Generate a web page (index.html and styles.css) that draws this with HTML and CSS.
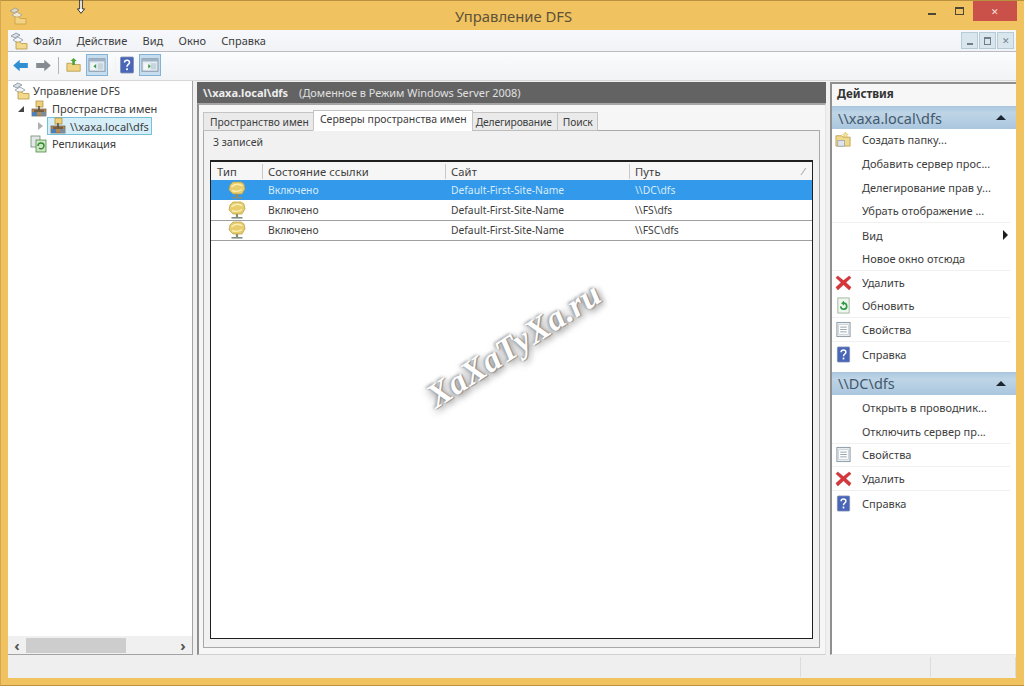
FILE: index.html
```html
<!DOCTYPE html>
<html lang="ru">
<head>
<meta charset="utf-8">
<title>Управление DFS</title>
<link rel="stylesheet" href="styles.css">
</head>
<body>
<svg class="defs" width="0" height="0">
  <defs>
    <symbol id="mmc" viewBox="0 0 18 18">
      <path d="M1 4l5-3 4 2-5 3z" fill="#d9dfe6" stroke="#7d8b99" stroke-width=".8"/>
      <path d="M3 8l5-3 5 3-5 3z" fill="#f3f5f7" stroke="#8b97a3" stroke-width=".8"/>
      <path d="M6 10h4l1 1.500h6v5.500H6z" fill="#f2d98e" stroke="#b9953f" stroke-width=".8"/>
    </symbol>
    <symbol id="ns" viewBox="0 0 18 18">
      <rect x="2" y="9" width="14" height="7" fill="#b78a54" stroke="#6d5a46" stroke-width=".7"/>
      <rect x="6" y="1" width="7" height="6" fill="#f0cf7a" stroke="#a98b3b" stroke-width=".7"/>
      <path d="M9 6v4M4 11h10" stroke="#333" stroke-width="1.200"/>
      <rect x="2" y="12" width="5" height="4" fill="#4d7fb8"/>
      <rect x="11" y="12" width="5" height="4" fill="#7b8c9c"/>
    </symbol>
    <symbol id="repl" viewBox="0 0 18 18">
      <rect x="1" y="1" width="9" height="11" fill="#e2e8ea" stroke="#6f8c6f" stroke-width=".8"/>
      <rect x="6" y="5" width="10" height="12" fill="#cfe4c4" stroke="#4f8a45" stroke-width=".8"/>
      <path d="M8 11a3 3 0 0 1 6 0M14 11a3 3 0 0 1-5 2" fill="none" stroke="#2f8a2f" stroke-width="1.400"/>
    </symbol>
    <symbol id="up" viewBox="0 0 18 18">
      <path d="M1 7h5l1.500 1.500H16V16H1z" fill="#f0d47f" stroke="#b08f3c" stroke-width=".8"/>
      <path d="M7 9V4.500h-2L8.500 1 12 4.500h-2V9z" fill="#4ea53a"/>
    </symbol>
    <symbol id="pane" viewBox="0 0 20 18">
      <rect x="1" y="2" width="18" height="14" fill="#e3ecf2" stroke="#7f8f9f"/>
      <rect x="1" y="2" width="18" height="3" fill="#9fb2c4"/>
      <rect x="3" y="7" width="6" height="7" fill="#f4f7f9"/>
      <rect x="11" y="7" width="6" height="7" fill="#c6d4de"/>
      <path d="M6 10.500l3-2.500v5z" fill="#3c9a3c"/>
    </symbol>
    <symbol id="pane2" viewBox="0 0 20 18">
      <rect x="1" y="2" width="18" height="14" fill="#e3ecf2" stroke="#7f8f9f"/>
      <rect x="1" y="2" width="18" height="3" fill="#9fb2c4"/>
      <rect x="3" y="7" width="6" height="7" fill="#f4f7f9"/>
      <rect x="11" y="7" width="6" height="7" fill="#c6d4de"/>
      <path d="M11 10.500l-3-2.500v5z" fill="#3c9a3c"/>
    </symbol>
    <symbol id="help" viewBox="0 0 16 18">
      <rect x="1.500" y="1" width="13" height="16" rx="1" fill="#4a66b8" stroke="#7f8fb5" stroke-width=".8"/>
      <path d="M5.500 6.500c0-3 5-3 5 0 0 2-2.500 2-2.500 4.300" fill="none" stroke="#fff" stroke-width="1.600"/>
      <rect x="7.100" y="12.300" width="1.800" height="1.900" fill="#fff"/>
    </symbol>
    <symbol id="server" viewBox="0 0 18 18">
      <path d="M2 4l3-3h8l3 2 1 5-3 5H5L1 9z" fill="#e7cd6c" stroke="#b79f42" stroke-width=".7"/>
      <path d="M3.500 6c3-3.500 8-3.500 11-1M4 9.500c3 1.200 7 1.200 10-1" fill="none" stroke="#f9eeb4" stroke-width="1.400"/>
      <path d="M9 13v3" stroke="#8d8d68" stroke-width="2.200"/>
      <path d="M3.500 16.800h11" stroke="#7f8f86" stroke-width="1.600"/>
    </symbol>
    <symbol id="del" viewBox="0 0 18 18">
      <path d="M3 2l6 5 6-5 2 2-5.500 5 5.500 5-2 3-6-5.500L3 17l-2-3 5.500-5L1 4z" fill="#d8343a" stroke="#a8383d" stroke-width=".5"/>
    </symbol>
    <symbol id="refresh" viewBox="0 0 18 18">
      <rect x="3" y="1" width="12" height="16" fill="#eef6ee" stroke="#9fb79f"/>
      <path d="M6 10a3.200 3.200 0 1 0 3-3.500" fill="none" stroke="#2e9a43" stroke-width="1.700"/>
      <path d="M9.500 4v5L6.500 6.500z" fill="#2e9a43"/>
    </symbol>
    <symbol id="props" viewBox="0 0 18 18">
      <rect x="2" y="1.500" width="14" height="15" fill="#e8edf0" stroke="#8b98a3"/>
      <rect x="4" y="4" width="10" height="10" fill="#fff" stroke="#b4bec6" stroke-width=".6"/>
      <path d="M5.500 6.500h7M5.500 9h7M5.500 11.500h7" stroke="#8b98a3" stroke-width=".9"/>
    </symbol>
    <symbol id="newfolder" viewBox="0 0 18 18">
      <path d="M1 5h6l1.500 1.500H16V16H1z" fill="#f0d88d" stroke="#b59645" stroke-width=".8"/>
      <rect x="3" y="10" width="7" height="6" fill="#dde4ee" stroke="#7f90a8" stroke-width=".6"/>
      <path d="M11 1l1 2 2 .5-1.500 1.500.5 2-2-1-2 1 .5-2L8 3.500 10 3z" fill="#f7e59a" stroke="#c9ab4b" stroke-width=".5"/>
    </symbol>
  </defs>
</svg>

<div class="window">
  <header class="titlebar">
    <svg class="app-icon"><use href="#mmc"/></svg>
    <span class="title">Управление DFS</span>
    <div class="win-controls">
      <span class="wc wc-min"><i></i></span>
      <span class="wc wc-max"><i></i></span>
      <span class="wc wc-close">✕</span>
    </div>
  </header>

  <div class="client">
    <nav class="menubar">
      <svg class="menu-icon"><use href="#mmc"/></svg>
      <span class="menu-item">Файл</span>
      <span class="menu-item">Действие</span>
      <span class="menu-item">Вид</span>
      <span class="menu-item">Окно</span>
      <span class="menu-item">Справка</span>
      <div class="mdi-controls">
        <span class="mdi"><i class="mdi-min"></i></span>
        <span class="mdi"><i class="mdi-rest"></i></span>
        <span class="mdi mdi-x">✕</span>
      </div>
    </nav>

    <div class="toolbar">
      <svg class="tb-arrow" viewBox="0 0 20 16"><path d="M1 8l8-7v4h10v6H9v4z" fill="#2f8fd0"/></svg>
      <svg class="tb-arrow" viewBox="0 0 20 16"><path d="M19 8l-8-7v4H1v6h10v4z" fill="#858b90"/></svg>
      <span class="tb-sep"></span>
      <svg class="tb-icon"><use href="#up"/></svg>
      <span class="tb-toggle"><svg><use href="#pane"/></svg></span>
      <span class="tb-sep tb-sep-faint"></span>
      <svg class="tb-icon"><use href="#help"/></svg>
      <span class="tb-toggle"><svg><use href="#pane2"/></svg></span>
    </div>

    <div class="panes">
      <aside class="tree">
        <div class="tree-items">
          <div class="node lvl0"><svg class="ico"><use href="#mmc"/></svg><span>Управление DFS</span></div>
          <div class="node lvl1"><span class="tw tw-open"></span><svg class="ico"><use href="#ns"/></svg><span>Пространства имен</span></div>
          <div class="node lvl2"><span class="tw tw-closed"></span><span class="selected"><svg class="ico"><use href="#ns"/></svg><span>\\xaxa.local\dfs</span></span></div>
          <div class="node lvl1b"><svg class="ico"><use href="#repl"/></svg><span>Репликация</span></div>
        </div>
        <div class="hscroll">
          <span class="sc-arrow">‹</span>
          <span class="sc-track"><span class="sc-thumb"></span></span>
          <span class="sc-arrow">›</span>
        </div>
      </aside>

      <main class="center">
        <div class="center-head"><b>\\xaxa.local\dfs</b><span>(Доменное в Режим Windows Server 2008)</span></div>
        <div class="center-body">
          <div class="tabs">
            <span class="tab">Пространство имен</span>
            <span class="tab tab-active">Серверы пространства имен</span>
            <span class="tab tab-tight tab-deleg">Делегирование</span>
            <span class="tab tab-tight tab-find">Поиск</span>
          </div>
          <section class="tab-panel">
            <p class="count">3 записей</p>
            <div class="list">
              <div class="list-head">
                <span>Тип</span><span>Состояние ссылки</span><span>Сайт</span><span class="path-h">Путь<i>⁄</i></span>
              </div>
              <div class="row row-sel"><span class="cell-ico"><svg><use href="#server"/></svg></span><span>Включено</span><span>Default-First-Site-Name</span><span>\\DC\dfs</span></div>
              <div class="row"><span class="cell-ico"><svg><use href="#server"/></svg></span><span>Включено</span><span>Default-First-Site-Name</span><span>\\FS\dfs</span></div>
              <div class="row"><span class="cell-ico"><svg><use href="#server"/></svg></span><span>Включено</span><span>Default-First-Site-Name</span><span>\\FSC\dfs</span></div>
            </div>
          </section>
        </div>
      </main>

      <aside class="actions">
        <h2 class="actions-title">Действия</h2>
        <div class="group-head"><span>\\xaxa.local\dfs</span><i class="caret"></i></div>
        <ul class="action-list list-a">
          <li><svg><use href="#newfolder"/></svg><span>Создать папку...</span></li>
          <li><span class="noicon">Добавить сервер прос...</span></li>
          <li><span class="noicon">Делегирование прав у...</span></li>
          <li class="sep"><span class="noicon">Убрать отображение ...</span></li>
          <li><span class="noicon">Вид</span><i class="sub"></i></li>
          <li class="sep"><span class="noicon">Новое окно отсюда</span></li>
          <li><svg><use href="#del"/></svg><span>Удалить</span></li>
          <li class="sep"><svg><use href="#refresh"/></svg><span>Обновить</span></li>
          <li class="sep"><svg><use href="#props"/></svg><span>Свойства</span></li>
          <li><svg><use href="#help"/></svg><span>Справка</span></li>
        </ul>
        <div class="group-head group-2"><span>\\DC\dfs</span><i class="caret"></i></div>
        <ul class="action-list list-b">
          <li><span class="noicon">Открыть в проводник...</span></li>
          <li class="sep"><span class="noicon">Отключить сервер пр...</span></li>
          <li class="sep"><svg><use href="#props"/></svg><span>Свойства</span></li>
          <li class="sep"><svg><use href="#del"/></svg><span>Удалить</span></li>
          <li><svg><use href="#help"/></svg><span>Справка</span></li>
        </ul>
      </aside>
    </div>

    <footer class="statusbar">
      <span class="st st-a"></span><span class="st st-b"></span><span class="st st-c"></span>
    </footer>
  </div>
</div>

<div class="watermark">XaXaTyXa.ru</div>
<svg class="cursor" viewBox="0 0 10 18"><path d="M3.500 0v10H1l4 5 4-5H6.500V0z" fill="#fff" stroke="#222" stroke-width="1"/></svg>
</body>
</html>
```
FILE: styles.css
```css
* { box-sizing: border-box; }
html, body { margin: 0; height: 686px; overflow: hidden; }
body {
  font-family: "Noto Sans", "Open Sans", sans-serif;
  font-size: 11px;
  color: #3a3a3a;
  background: #f0c260;
  position: relative;
}
.defs { position: absolute; }
.window {
  height: 686px;
  display: flex;
  flex-direction: column;
  border-top: 1px solid #b8923f;
  border-bottom: 1px solid #b8923f;
  border-left: 1px solid #d3a850;
}

/* title bar */
.titlebar { height: 29px; display: grid; grid-template-columns: 1fr auto 1fr; align-items: center; padding-left: 8px; flex: none; }
.app-icon { width: 18px; height: 18px; opacity: .75; margin-top: 1px; }
.title { text-align: center; font-size: 14.800px; color: #5c5239; margin-left: -6px; }
.win-controls { display: flex; justify-self: end; margin-right: 7px; margin-top: -9px; height: 20px; }
.wc { width: 28px; display: flex; align-items: center; justify-content: center; }
.wc-min i { width: 8px; height: 2px; background: #4d4535; margin-top: 6px; }
.wc-max { width: 26px; }
.wc-max i { width: 9px; height: 8px; border: 1px solid #4d4535; border-top-width: 2px; }
.wc-close { width: 44px; background: #c9514a; color: #f6e3dc; font-size: 9px; margin-left: 1px; }

.client { flex: 1; min-height: 0; margin: 0 8px 7px 7px; background: #f0f0f0; display: flex; flex-direction: column; }

/* menu */
.menubar { height: 22px; flex: none; display: flex; align-items: center; padding: 0 2px 0 2px; background: linear-gradient(#f6f8fb, #f1f3f6); border-bottom: 1px solid #b9bcbf; }
.menu-icon { width: 18px; height: 18px; margin-right: 5px; }
.menu-item { margin-right: 15.300px; font-size: 11px; color: #3d3d3d; }
.mdi-controls { margin-left: auto; display: flex; gap: 1px; }
.mdi { width: 17px; height: 17px; background: #dae6ee; border: 1px solid #b6cbd6; display: flex; align-items: center; justify-content: center; color: #708593; font-size: 9px; }
.mdi-min { width: 6px; height: 2px; background: #6e7f8a; margin-top: 6px; }
.mdi-rest { width: 7px; height: 8px; border: 1px solid #6e7f8a; border-top-width: 2px; }

/* toolbar */
.toolbar { height: 28px; flex: none; display: flex; align-items: center; padding: 0 0 2px 4px; background: linear-gradient(#fbfcfd, #f2f3f4); }
.tb-arrow { width: 17px; height: 13px; margin-right: 6px; }
.tb-sep { width: 1px; height: 17px; background: #b5b5b5; margin: 0 7px 0 0; }
.tb-sep-faint { background: #f2f3f4; margin: 0 3px; }
.tb-icon { width: 16px; height: 18px; margin-right: 4px; }
.tb-toggle { width: 22px; height: 22px; background: #c5ddee; border: 1px solid #82b3d6; display: flex; align-items: center; justify-content: center; margin-right: 4px; }
.tb-toggle svg { width: 18px; height: 16px; }

/* panes */
.panes { flex: 1; min-height: 0; display: flex; border-top: 1px solid #d8d8d8; }
.tree { width: 185px; flex: none; background: #fff; border-right: 1px solid #a3a3a3; border-bottom: 1px solid #a3a3a3; display: flex; flex-direction: column; }
.tree-items { flex: 1; padding-top: 1px; }
.node { display: flex; align-items: center; height: 17.700px; white-space: nowrap; font-size: 11px; color: #3d3d3d; }
.ico { width: 18px; height: 18px; flex: none; margin-right: 4px; }
.lvl0 { padding-left: 4px; }
.lvl0 .ico { margin-right: 3px; }
.lvl1 { padding-left: 10px; }
.lvl2 { padding-left: 30px; }
.lvl1b { padding-left: 22px; }
.tw { width: 0; height: 0; flex: none; border-style: solid; }
.tw-open { border-width: 0 0 6px 6px; border-color: transparent transparent #444 transparent; margin-right: 6px; }
.tw-closed { border-width: 4px 0 4px 5px; border-color: transparent transparent transparent #b0b0b0; margin-right: 4px; }
.selected { display: flex; align-items: center; background: #d5eef8; border: 1px solid #76c0d8; height: 18px; padding: 0 1px; width: 105px; }
.selected .ico { margin-right: 3px; }
.hscroll { height: 18px; background: #f0f0f0; display: flex; align-items: center; flex: none; }
.sc-arrow { width: 18px; text-align: center; font-size: 15px; line-height: 15px; color: #555; font-weight: 700; }
.sc-track { flex: 1; height: 15px; }
.sc-thumb { display: block; width: 100px; height: 15px; background: #cdcdcd; }

.center { flex: 1; min-width: 0; margin-left: 4px; display: flex; flex-direction: column; }
.center-head { height: 21px; flex: none; margin-top: 1px; background: #636363; color: #e0e0e0; display: flex; align-items: center; padding-left: 6px; gap: 11px; font-size: 10.900px; }
.center-head b { font-size: 11px; color: #eee; }
.center-body { flex: 1; min-height: 0; border-top: 2px solid #a5a5a5; border-left: 2px solid #8f8f8f; border-bottom: 1px solid #d0d0d0; border-right: 1px solid #e4e4e4; background: #f6f6f6; padding: 5px 5px 6px 4px; display: flex; flex-direction: column; }
.tabs { display: flex; align-items: flex-end; height: 21px; flex: none; position: relative; z-index: 1; margin-bottom: -1px; }
.tab { height: 19px; padding: 0 4px; background: #eaeaea; border: 1px solid #c4c4c4; border-bottom: 1px solid #bdbdbd; margin-left: -1px; display: flex; align-items: center; font-size: 10.300px; color: #3d3d3d; }
.tab:first-child { margin-left: 0; padding: 0 4px 0 6px; }
.tab-active { height: 21px; padding: 0 5px 3px 6px; background: #fff; border-bottom-color: #fff; font-size: 10.500px; }
.tab-tight { letter-spacing: -.15px; }
.tab-deleg { padding: 0 5px 0 3px; }
.tab-find { padding: 0 4px 0 5px; }
.tab-panel { flex: 1; min-height: 0; border: 1px solid #a9a9a9; background: #f1f1f1; padding: 4px 6px 8px 6px; display: flex; flex-direction: column; }
.count { margin: 0 0 10px 3px; height: 15px; line-height: 15px; font-size: 10.500px; color: #3d3d3d; }
.list { flex: 1; min-height: 0; background: #fff; border: 1px solid #1f1f1f; border-top-width: 2px; }
.list-head, .row { display: grid; grid-template-columns: 51px 183px 184px 1fr; align-items: center; }
.list-head { height: 18px; font-size: 11.200px; letter-spacing: .1px; background: #f6f6f6; color: #3d3d3d; }
.list-head span { padding-left: 5px; border-left: 1px solid #c8c8c8; line-height: 15px; }
.list-head span:first-child { border-left: 0; padding-left: 6px; }
.path-h { display: flex; justify-content: space-between; padding-right: 8px; }
.path-h i { font-size: 9px; color: #888; }
.row { height: 20.300px; border-bottom: 1px solid #9f9f9f; font-size: 10.300px; color: #3d3d3d; }
.row > span { padding-left: 6px; white-space: nowrap; }
.row-sel { background: #3399ea; color: #d6ecfb; border-bottom-color: #3399ea; }
.cell-ico { display: flex; justify-content: center; padding-left: 0 !important; }
.cell-ico svg { width: 18px; height: 18px; }

/* actions */
.actions { width: 186px; flex: none; margin-left: 4px; background: #fff; border-left: 2px solid #8f8f8f; border-top: 2px solid #8f8f8f; margin-top: 1px; border-bottom: 1px solid #e8e8e8; }
.actions-title { margin: 0; height: 22px; padding: 0 0 3px 5px; display: flex; align-items: center; font-size: 11.500px; color: #333; font-weight: 700; background: #f7f7f7; }
.group-head { height: 23px; background: linear-gradient(#a9c6de, #bfd5e6 30%, #a9c6df); display: flex; align-items: center; justify-content: space-between; padding: 0 10px 0 6px; font-size: 14.500px; color: #44586b; }
.group-2 { margin-top: 6px; }
.caret { width: 0; height: 0; border-style: solid; border-width: 0 5px 5px 5px; border-color: transparent transparent #1a2530 transparent; }
.action-list { list-style: none; margin: 0; padding: 0; }
.list-a { margin-top: -1px; }
.list-b { margin-top: 1px; }
.action-list li { height: 23.800px; display: flex; align-items: center; padding-left: 3px; font-size: 11px; color: #3d3d3d; white-space: nowrap; margin-right: 6px; }
.action-list li.sep { border-bottom: 1px solid #f0f0f0; }
.action-list svg { width: 17px; height: 17px; flex: none; margin-right: 10px; }
.noicon { padding-left: 27px; }
.sub { margin-left: auto; margin-right: 2px; width: 0; height: 0; border-style: solid; border-width: 5px 0 5px 5px; border-color: transparent transparent transparent #1c1c1c; }

/* status */
.statusbar { height: 23px; flex: none; background: #efefef; display: flex; justify-content: flex-end; }
.st { height: 20px; border-left: 1px solid #dcdcdc; margin-top: 2px; }
.st-a { width: 130px; }
.st-b { width: 85px; }
.st-c { width: 0; }

/* overlays */
.watermark {
  position: absolute;
  left: 394px;
  top: 326px;
  width: 240px;
  text-align: center;
  font-family: "Liberation Serif", "DejaVu Serif", serif;
  font-style: italic;
  font-weight: 700;
  font-size: 34px;
  line-height: 38px;
  color: #fff;
  letter-spacing: .5px;
  transform: rotate(-33deg);
  text-shadow: 1px 1px 1px #8c8c8c, -1px -1px 3px #9a9a9a, 2px 3px 6px #9a9a9a, -3px 3px 9px #b5b5b5;
}
.cursor { position: absolute; left: 76px; top: 0; width: 10px; height: 16px; }
```
